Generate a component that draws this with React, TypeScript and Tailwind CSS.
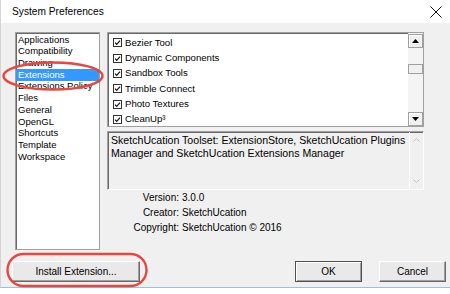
import React from 'react'

const categories = [
  'Applications',
  'Compatibility',
  'Drawing',
  'Extensions',
  'Extensions Policy',
  'Files',
  'General',
  'OpenGL',
  'Shortcuts',
  'Template',
  'Workspace',
]

const extensions = [
  'Bezier Tool',
  'Dynamic Components',
  'Sandbox Tools',
  'Trimble Connect',
  'Photo Textures',
  'CleanUp³',
]

const info = [
  ['Version:', '3.0.0'],
  ['Creator:', 'SketchUcation'],
  ['Copyright:', 'SketchUcation © 2016'],
]

function CheckBox() {
  return (
    <svg width="9" height="9" viewBox="0 0 9 9" className="shrink-0">
      <rect x="0.5" y="0.5" width="8" height="8" fill="#fff" stroke="#333" />
      <path d="M2 4.6 L3.7 6.3 L7 2.6" fill="none" stroke="#111" strokeWidth="1.2" />
    </svg>
  )
}

function ArrowButton({ dir }: { dir: 'up' | 'down' }) {
  return (
    <div className="flex h-[14px] w-[15px] items-center justify-center border border-[#a0a0a0] bg-[#f0f0f0] shadow-[inset_1px_1px_0_#fff]">
      <svg width="7" height="4" viewBox="0 0 7 4">
        {dir === 'up' ? <path d="M0 4 L3.5 0 L7 4 Z" fill="#000" /> : <path d="M0 0 L3.5 4 L7 0 Z" fill="#000" />}
      </svg>
    </div>
  )
}

function WinButton({ label, width, isDefault }: { label: string; width: string; isDefault?: boolean }) {
  return (
    <button
      className={
        isDefault
          ? `${width} h-[21px] border border-[#505050] bg-[#e9e9e9] shadow-[inset_1px_1px_0_#fff,inset_-1px_-1px_0_#a0a0a0] text-[10px] text-black`
          : `${width} h-[21px] border border-t-white border-l-white border-r-[#696969] border-b-[#696969] bg-[#e9e9e9] shadow-[inset_-1px_-1px_0_#a0a0a0] text-[10px] text-black`
      }
    >
      {label}
    </button>
  )
}

export default function App() {
  return (
    <div className="relative h-[294px] w-[450px] overflow-hidden bg-white font-['Liberation_Sans',Arial,sans-serif] text-[10px] text-black">
      {/* title bar */}
      <div className="flex h-[23px] items-center justify-between border-l border-[#d4d4d4] pl-[11px] pr-[7px]">
        <span className="text-[10.2px]">System Preferences</span>
        <svg width="12" height="12" viewBox="0 0 12 12" className="mr-[1px]">
          <path d="M0.5 0.5 L11.5 11.5 M11.5 0.5 L0.5 11.5" stroke="#111" strokeWidth="1" />
        </svg>
      </div>

      <div className="flex h-[265px] flex-col border-b border-l border-b-[#9cc0e4] border-l-[#d4d4d4] bg-[#f0f0f0] pt-[9px]">
        <div className="flex h-[218px] gap-[7px] pl-[14px]">
          {/* category list */}
          <div className="h-[218px] w-[85px] border border-[#a0a0a0] bg-white pt-[1px] text-[9.5px] shadow-[inset_1px_1px_0_#696969]">
            {categories.map((c) => (
              <div
                key={c}
                className={
                  c === 'Extensions'
                    ? 'flex h-[11.7px] items-center bg-[#3399ff] pl-[2px] text-white'
                    : 'flex h-[11.7px] items-center pl-[2px] whitespace-nowrap overflow-hidden'
                }
              >
                {c}
              </div>
            ))}
          </div>

          {/* right column */}
          <div className="flex w-[317px] flex-col">
            <div className="flex h-[95px] border border-[#a0a0a0] bg-white shadow-[inset_1px_1px_0_#696969]">
              <div className="flex-1 pl-[5px] pt-[2px] text-[9.6px]">
                {extensions.map((e) => (
                  <div key={e} className="flex h-[15.4px] items-center gap-[3px]">
                    <CheckBox />
                    <span>{e}</span>
                  </div>
                ))}
              </div>
              <div className="flex w-[15px] flex-col bg-[#f4f4f4] pt-[1px]">
                <ArrowButton dir="up" />
                <div className="mt-[16px] h-[10px] w-[15px] border border-[#a0a0a0] bg-[#f0f0f0]" />
                <div className="flex-1" />
                <ArrowButton dir="down" />
              </div>
            </div>

            <div className="mt-[4px] flex h-[59px] border border-[#a0a0a0] border-r-white border-b-white shadow-[inset_1px_1px_0_#696969]">
              <div className="flex-1 pl-[3px] pt-[2px] text-[10.6px] leading-[13px]">
                SketchUcation Toolset: ExtensionStore, SketchUcation Plugins
                <br />
                Manager and SketchUcation Extensions Manager
              </div>
              <div className="flex w-[14px] flex-col items-center justify-between border-l border-white py-[6px]">
                <svg width="7" height="4" viewBox="0 0 7 4">
                  <path d="M0.5 3.5 L3.5 0.5 L6.5 3.5" fill="none" stroke="#c2c2c2" />
                </svg>
                <svg width="7" height="4" viewBox="0 0 7 4">
                  <path d="M0.5 0.5 L3.5 3.5 L6.5 0.5" fill="none" stroke="#c2c2c2" />
                </svg>
              </div>
            </div>

            <div className="flex flex-col">
              {info.map(([k, v]) => (
                <div key={k} className="flex h-[15px] items-center">
                  <span className="w-[72px] text-right">{k}</span>
                  <span className="ml-[3px]">{v}</span>
                </div>
              ))}
            </div>
          </div>
        </div>

        {/* buttons */}
        <div className="mt-[11px] flex h-[21px] pl-[11px] pr-[4px]">
          <WinButton label="Install Extension..." width="w-[128px]" />
          <div className="flex-1" />
          <WinButton label="OK" width="w-[67px]" isDefault />
          <div className="w-[17px]" />
          <WinButton label="Cancel" width="w-[67px]" />
        </div>
      </div>

      {/* red annotation marks */}
      <svg className="pointer-events-none absolute left-0 top-0" width="450" height="294">
        <ellipse cx="53" cy="76" rx="49.5" ry="13.5" fill="none" stroke="#e8463f" strokeWidth="2.4" />
        <rect x="7.5" y="254" width="139" height="32" rx="16" fill="none" stroke="#e8463f" strokeWidth="2.4" />
      </svg>
    </div>
  )
}
